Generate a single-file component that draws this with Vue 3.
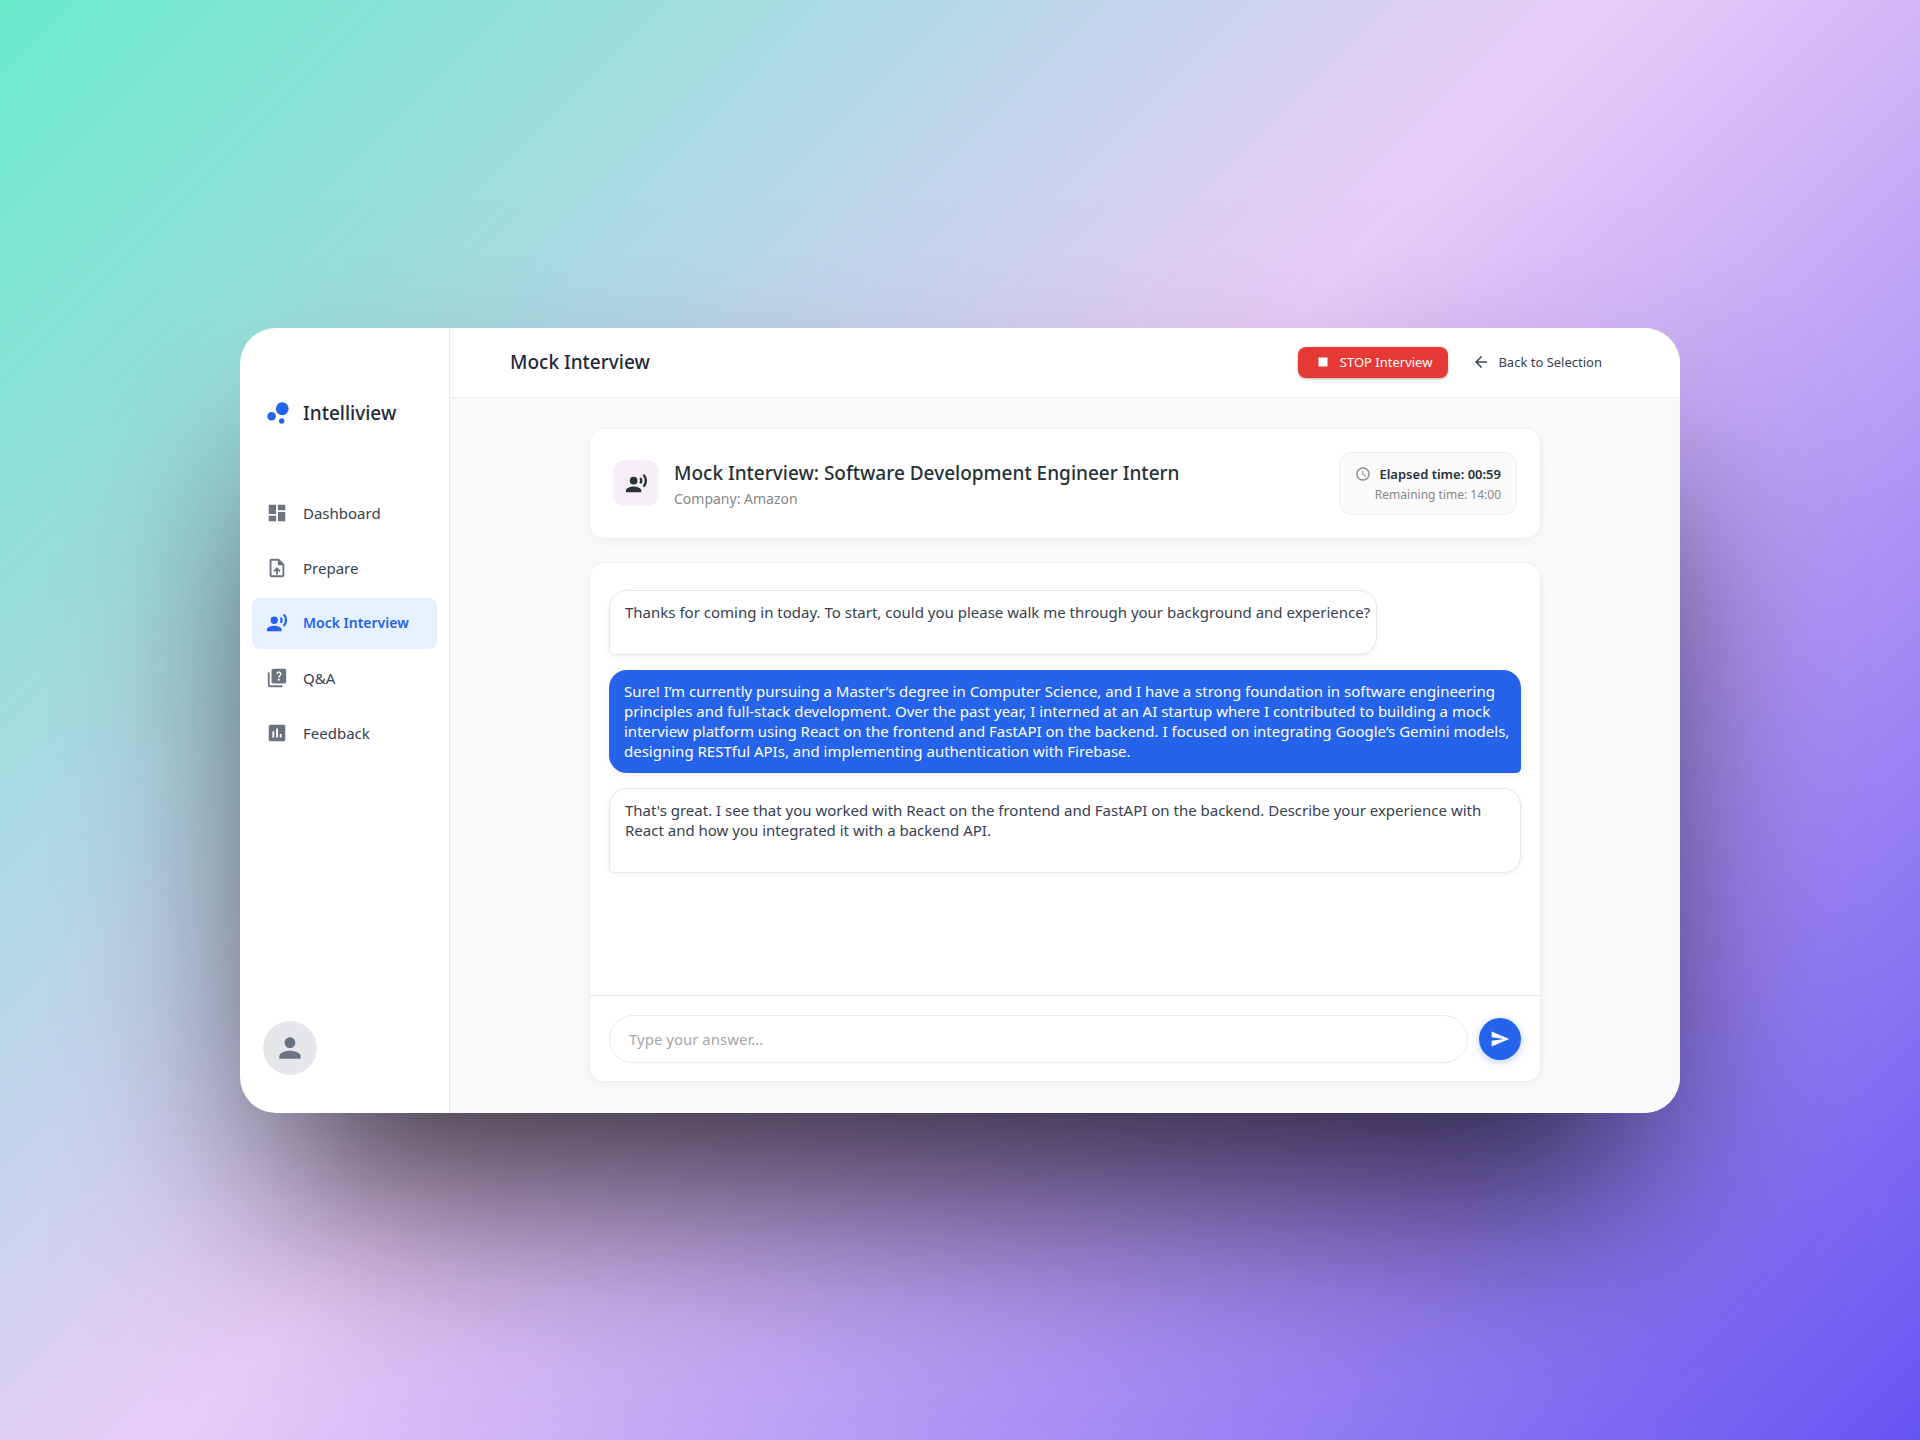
<script setup>
import { ref } from 'vue'

const voice =
  'M9 13a4 4 0 1 0 0-8 4 4 0 0 0 0 8zm0 2c-2.67 0-8 1.34-8 4v2h16v-2c0-2.66-5.33-4-8-4zm7.76-9.64-1.68 1.69c.84 1.18.84 2.71 0 3.89l1.68 1.69c2.02-2.02 2.02-5.07 0-7.27zM20.07 2l-1.63 1.63c2.77 3.02 2.77 7.56 0 10.74L20.07 16c3.9-3.89 3.91-9.95 0-14z'

const navItems = [
  { label: 'Dashboard', icon: 'M3 13h8V3H3v10zm0 8h8v-6H3v6zm10 0h8V11h-8v10zm0-18v6h8V3h-8z' },
  {
    label: 'Prepare',
    icon: 'M14 2H6c-1.1 0-1.99.9-1.99 2L4 20c0 1.1.89 2 1.99 2H18c1.1 0 2-.9 2-2V8l-6-6zm4 18H6V4h7v5h5v11zM8 15.01l1.41 1.41L11 14.84V19h2v-4.16l1.59 1.59L16 15.01 12.01 11 8 15.01z',
  },
  { label: 'Mock Interview', icon: voice, active: true },
  {
    label: 'Q&A',
    icon: 'M4 6H2v14c0 1.1.9 2 2 2h14v-2H4V6zM20 2H8c-1.1 0-2 .9-2 2v12c0 1.1.9 2 2 2h12c1.1 0 2-.9 2-2V4c0-1.1-.9-2-2-2zm-5.99 13c-.59 0-1.05-.47-1.05-1.05 0-.59.47-1.04 1.05-1.04.59 0 1.04.45 1.04 1.04-.01.58-.45 1.05-1.04 1.05zm2.5-6.17c-.63.93-1.23 1.21-1.56 1.81-.13.24-.18.4-.18 1.18h-1.52c0-.41-.06-1.08.26-1.65.41-.73 1.18-1.16 1.63-1.8.48-.68.21-1.94-1.14-1.94-.88 0-1.32.67-1.5 1.23l-1.37-.57C11.51 5.96 12.52 5 13.99 5c1.23 0 2.08.56 2.51 1.26.37.61.58 1.73.01 2.57z',
  },
  {
    label: 'Feedback',
    icon: 'M19 3H5c-1.1 0-2 .9-2 2v14c0 1.1.9 2 2 2h14c1.1 0 2-.9 2-2V5c0-1.1-.9-2-2-2zM9 17H7v-7h2v7zm4 0h-2V7h2v10zm4 0h-2v-4h2v4z',
  },
]

const messages = [
  {
    from: 'interviewer',
    text: 'Thanks for coming in today. To start, could you please walk me through your background and experience?',
  },
  {
    from: 'candidate',
    text: 'Sure! I’m currently pursuing a Master’s degree in Computer Science, and I have a strong foundation in software engineering principles and full-stack development. Over the past year, I interned at an AI startup where I contributed to building a mock interview platform using React on the frontend and FastAPI on the backend. I focused on integrating Google’s Gemini models, designing RESTful APIs, and implementing authentication with Firebase.',
  },
  {
    from: 'interviewer',
    text: "That's great. I see that you worked with React on the frontend and FastAPI on the backend. Describe your experience with React and how you integrated it with a backend API.",
  },
]

const answer = ref('')
</script>

<template>
  <div class="stage">
    <div class="window">
      <aside class="sidebar">
        <div class="brand">
          <svg class="brand-icon" viewBox="0 0 24 24" aria-hidden="true">
            <circle cx="7.2" cy="14.4" r="3.2" />
            <circle cx="14.8" cy="18" r="2" />
            <circle cx="15.2" cy="8.8" r="4.8" />
          </svg>
          <span>Intelliview</span>
        </div>
        <nav class="nav">
          <a
            v-for="item in navItems"
            :key="item.label"
            href="#"
            class="nav-item"
            :class="{ active: item.active }"
            :aria-current="item.active ? 'page' : undefined"
          >
            <svg viewBox="0 0 24 24" aria-hidden="true"><path :d="item.icon" /></svg>
            <span>{{ item.label }}</span>
          </a>
        </nav>
        <button class="avatar" type="button" aria-label="Account">
          <svg viewBox="0 0 24 24" aria-hidden="true">
            <path d="M12 12c2.21 0 4-1.79 4-4s-1.79-4-4-4-4 1.79-4 4 1.79 4 4 4zm0 2c-2.67 0-8 1.34-8 4v2h16v-2c0-2.66-5.33-4-8-4z" />
          </svg>
        </button>
      </aside>

      <div class="main">
        <header class="topbar">
          <h1>Mock Interview</h1>
          <button class="stop" type="button">
            <svg viewBox="0 0 24 24" aria-hidden="true"><path d="M6 6h12v12H6z" /></svg>
            STOP Interview
          </button>
          <button class="back" type="button">
            <svg viewBox="0 0 24 24" aria-hidden="true">
              <path d="M20 11H7.83l5.59-5.59L12 4l-8 8 8 8 1.41-1.41L7.83 13H20v-2z" />
            </svg>
            Back to Selection
          </button>
        </header>

        <main class="content">
          <section class="card summary">
            <div class="summary-icon">
              <svg viewBox="0 0 24 24" aria-hidden="true"><path :d="voice" /></svg>
            </div>
            <div class="summary-text">
              <h2>Mock Interview: Software Development Engineer Intern</h2>
              <p>Company: Amazon</p>
            </div>
            <div class="timer">
              <div class="elapsed">
                <svg viewBox="0 0 24 24" aria-hidden="true">
                  <path d="M11.99 2C6.47 2 2 6.48 2 12s4.47 10 9.99 10C17.52 22 22 17.52 22 12S17.52 2 11.99 2zM12 20c-4.42 0-8-3.58-8-8s3.58-8 8-8 8 3.58 8 8-3.58 8-8 8zm.5-13H11v6l5.25 3.15.75-1.23-4.5-2.67z" />
                </svg>
                <span>Elapsed time: 00:59</span>
              </div>
              <div class="remaining">Remaining time: 14:00</div>
            </div>
          </section>

          <section class="card chat">
            <div class="messages">
              <div v-for="(message, i) in messages" :key="i" class="bubble" :class="message.from">
                <p>{{ message.text }}</p>
              </div>
            </div>
            <form class="composer" @submit.prevent>
              <input v-model="answer" type="text" placeholder="Type your answer..." aria-label="Your answer" />
              <button class="send" type="submit" aria-label="Send">
                <svg viewBox="0 0 24 24" aria-hidden="true"><path d="M2.01 21 23 12 2.01 3 2 10l15 2-15 2z" /></svg>
              </button>
            </form>
          </section>
        </main>
      </div>
    </div>
  </div>
</template>

<style>
body {
  margin: 0;
}
</style>

<style scoped>
.stage,
.stage * {
  box-sizing: border-box;
}

.stage {
  min-height: 100vh;
  display: flex;
  align-items: center;
  justify-content: center;
  background: linear-gradient(135deg, #69eacb 0%, #eaccf8 48%, #6654f1 100%);
  font-family: 'Noto Sans', sans-serif;
  font-size: 15px;
  line-height: 20px;
  color: #374151;
}

.stage svg {
  display: block;
  flex: none;
  fill: currentColor;
}

h1,
h2,
p {
  margin: 0;
}

button,
input {
  font: inherit;
  color: inherit;
}

button {
  border: 0;
  padding: 0;
  background: none;
  cursor: pointer;
}

.window {
  width: 75%;
  display: flex;
  overflow: hidden;
  border-radius: 36px;
  background: #fff;
  box-shadow: 0 120px 190px -38px rgba(0, 0, 0, 0.77);
}

.sidebar {
  flex: none;
  width: 210px;
  display: flex;
  flex-direction: column;
  padding: 68px 12px 38px;
  border-right: 1px solid #e9eaed;
}

.brand {
  display: flex;
  align-items: center;
  gap: 9px;
  height: 34px;
  padding-left: 10px;
  font-size: 19px;
  font-weight: 500;
  color: #1f2937;
}

.brand-icon {
  width: 32px;
  height: 32px;
  color: #2563eb;
}

.nav {
  flex: 1;
  display: flex;
  flex-direction: column;
  gap: 4px;
  margin-top: 58px;
}

.nav-item {
  display: flex;
  align-items: center;
  gap: 15px;
  height: 51px;
  padding: 0 14px;
  border-radius: 8px;
  color: #374151;
  text-decoration: none;
}

.nav-item svg {
  width: 22px;
  height: 22px;
  color: #6b7280;
}

.nav-item.active {
  background: #e6f0ff;
  color: #2563eb;
  font-size: 14px;
  font-weight: 600;
}

.nav-item.active svg {
  color: inherit;
}

.avatar {
  display: flex;
  align-items: center;
  justify-content: center;
  width: 54px;
  height: 54px;
  margin-left: 11px;
  border-radius: 50%;
  background: #e5e7eb;
  color: #6b7280;
}

.avatar svg {
  width: 32px;
  height: 32px;
}

.main {
  flex: 1;
  min-width: 0;
  display: flex;
  flex-direction: column;
  background: #f9fafc;
}

.topbar {
  display: flex;
  align-items: center;
  gap: 8px;
  height: 70px;
  padding: 0 62px 0 60px;
  background: #fff;
  border-bottom: 1px solid #e9eaed;
}

.topbar h1 {
  flex: 1;
  font-size: 19px;
  font-weight: 500;
  color: #1f2937;
}

.stop,
.back {
  display: flex;
  align-items: center;
  gap: 8px;
  height: 31px;
  padding: 0 16px;
  border-radius: 8px;
  font-size: 13px;
}

.stop svg,
.back svg {
  width: 18px;
  height: 18px;
}

.stop {
  background: #e53935;
  color: #fff;
  box-shadow: 0 1px 3px rgba(0, 0, 0, 0.3);
}

.content {
  flex: 1;
  display: flex;
  flex-direction: column;
  gap: 23px;
  width: 100%;
  max-width: 1014px;
  margin: 0 auto;
  padding: 30px 31px 31px;
}

.card {
  border: 1px solid #eeeff1;
  border-radius: 15px;
  background: #fff;
  box-shadow: 0 4px 16px rgba(0, 0, 0, 0.04);
}

.summary {
  display: flex;
  align-items: center;
  gap: 15px;
  padding: 23px;
}

.summary-icon {
  display: flex;
  align-items: center;
  justify-content: center;
  width: 46px;
  height: 46px;
  border-radius: 12px;
  background: #f6eff7;
  color: #263238;
}

.summary-icon svg {
  width: 23px;
  height: 23px;
}

.summary-text {
  flex: 1;
  min-width: 0;
}

.summary-text h2 {
  font-size: 19px;
  line-height: 32px;
  font-weight: 500;
  color: #263238;
}

.summary-text p {
  font-size: 14px;
  color: #888;
}

.timer {
  padding: 11px 15px 10px;
  border: 1px solid #eeeeee;
  border-radius: 12px;
  background: #fafafa;
  text-align: right;
}

.elapsed {
  display: flex;
  align-items: center;
  gap: 8px;
  font-size: 13px;
  font-weight: 600;
  color: #263238;
}

.elapsed svg {
  width: 16px;
  height: 16px;
  color: #888;
}

.remaining {
  margin-top: 2px;
  font-size: 12px;
  line-height: 18px;
  color: #888;
}

.chat {
  flex: 1;
  display: flex;
  flex-direction: column;
}

.messages {
  flex: 1;
  display: flex;
  flex-direction: column;
  align-items: flex-start;
  gap: 15px;
  min-height: 432px;
  padding: 27px 19px;
}

.bubble {
  padding: 11px 6px 12px 15px;
  border-radius: 18px;
  box-shadow: 0 2px 6px rgba(0, 0, 0, 0.06);
}

.bubble.interviewer {
  padding-bottom: 32px;
  border: 1px solid #e6e7e9;
  border-bottom-left-radius: 5px;
  background: #fff;
}

.bubble.candidate {
  align-self: flex-end;
  border-bottom-right-radius: 5px;
  background: #2563eb;
  color: #fff;
}

.composer {
  display: flex;
  align-items: center;
  gap: 11px;
  padding: 19px 19px 18px;
  border-top: 1px solid #e6e7e9;
}

.composer input {
  flex: 1;
  min-width: 0;
  height: 48px;
  padding: 0 19px;
  border: 1px solid #ebebeb;
  border-radius: 24px;
  background: #fff;
  outline: none;
}

.composer input::placeholder {
  color: #a6a6a6;
  opacity: 1;
}

.send {
  display: flex;
  align-items: center;
  justify-content: center;
  width: 42px;
  height: 42px;
  border-radius: 50%;
  background: #2563eb;
  color: #fff;
  box-shadow: 0 2px 8px rgba(37, 99, 235, 0.3);
}

.send svg {
  width: 20px;
  height: 20px;
}
</style>
